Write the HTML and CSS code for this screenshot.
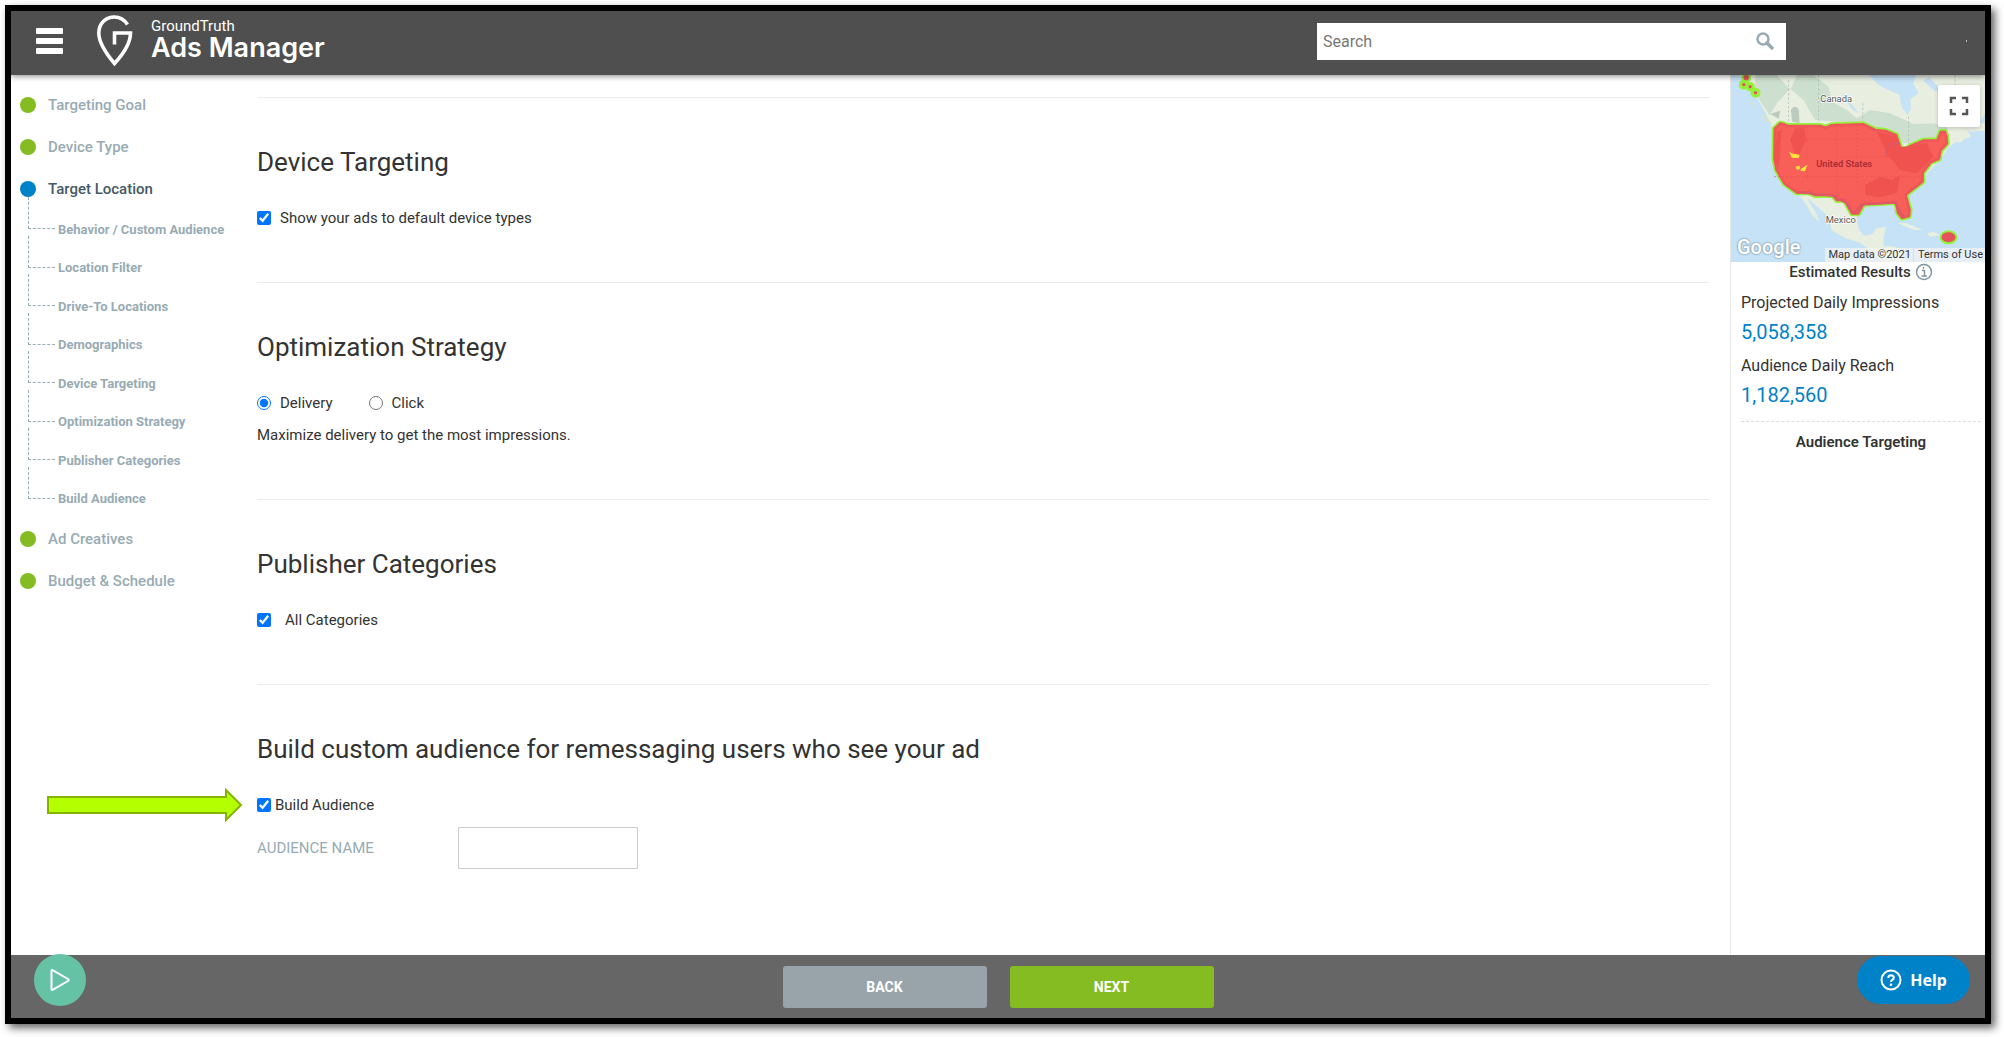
FILE: index.html
```html
<!DOCTYPE html>
<html lang="en">
<head>
    <meta charset="UTF-8">
    <meta name="viewport" content="width=device-width, initial-scale=1.0">
    <title>GroundTruth Ads Manager</title>
    <link rel="stylesheet" href="styles.css">
</head>
<body>
    <div class="frame">
        <header class="topbar">
            <button class="menu-btn" type="button" aria-label="Menu">
                <span></span><span></span><span></span>
            </button>
            <a class="brand" href="#">
                <svg class="brand-logo" viewBox="0 0 36 52" aria-hidden="true">
                    <path d="M30.500 9.500C27.500 5 22.800 2 17.500 2C8.500 2 1.800 8.500 1.800 18C1.800 29 12 42 17.500 48.500C23.500 42 33.500 29.500 33.500 18H17.500V29.500" fill="none" stroke="#fff" stroke-width="3.600"/>
                </svg>
                <span class="brand-text">
                    <span class="brand-small">GroundTruth</span>
                    <span class="brand-big">Ads Manager</span>
                </span>
            </a>
            <form class="search">
                <input type="search" placeholder="Search" aria-label="Search">
                <button type="button" aria-label="Submit search">
                    <svg viewBox="0 0 18 18" width="18" height="18">
                        <circle cx="7" cy="7" r="5.500" fill="none" stroke="#98abb3" stroke-width="2.500"/>
                        <path d="M11 11L16 16" stroke="#98abb3" stroke-width="3.500" stroke-linecap="round"/>
                    </svg>
                </button>
            </form>
            <span class="user-dot"></span>
        </header>

        <div class="content">
            <nav class="steps">
                <ul>
                    <li><a href="#">Targeting Goal</a></li>
                    <li><a href="#">Device Type</a></li>
                    <li class="current"><a href="#">Target Location</a>
                        <ul class="substeps">
                            <li><a href="#">Behavior / Custom Audience</a></li>
                            <li><a href="#">Location Filter</a></li>
                            <li><a href="#">Drive-To Locations</a></li>
                            <li><a href="#">Demographics</a></li>
                            <li><a href="#">Device Targeting</a></li>
                            <li><a href="#">Optimization Strategy</a></li>
                            <li><a href="#">Publisher Categories</a></li>
                            <li><a href="#">Build Audience</a></li>
                        </ul>
                    </li>
                    <li><a href="#">Ad Creatives</a></li>
                    <li><a href="#">Budget &amp; Schedule</a></li>
                </ul>
            </nav>

            <main class="settings">
                <section>
                    <h2>Device Targeting</h2>
                    <div class="row">
                        <label><input type="checkbox" checked> Show your ads to default device types</label>
                    </div>
                </section>
                <section>
                    <h2>Optimization Strategy</h2>
                    <div class="row">
                        <label><input type="radio" name="strategy" checked> Delivery</label>
                        <label><input type="radio" name="strategy"> Click</label>
                    </div>
                    <p class="row">Maximize delivery to get the most impressions.</p>
                </section>
                <section>
                    <h2>Publisher Categories</h2>
                    <div class="row">
                        <label class="wide"><input type="checkbox" checked> All Categories</label>
                    </div>
                </section>
                <section>
                    <h2>Build custom audience for remessaging users who see your ad</h2>
                    <div class="row">
                        <svg class="arrow" viewBox="0 0 196 34" aria-hidden="true">
                            <path d="M1 9H179V2L194 17L179 32V25H1Z" fill="#b4ff00" stroke="#86b300" stroke-width="2"/>
                        </svg>
                        <label class="tight"><input type="checkbox" checked> Build Audience</label>
                    </div>
                    <div class="field">
                        <label for="audience-name">AUDIENCE NAME</label>
                        <input type="text" id="audience-name">
                    </div>
                </section>
            </main>

            <aside class="results">
                <div class="map">
                    <svg viewBox="92 45 763 561" preserveAspectRatio="xMidYMid slice" role="img" aria-label="Map of targeted area">
                        <rect x="92" y="45" width="763" height="561" fill="#c6e2f6"/>
                        <!-- land -->
                        <path d="M115 45H508Q530 75 560 88L598 104L604 140L622 165L632 148L630 118L655 100L640 72L648 45H855V160L838 188L855 190V214L800 205L812 230L770 245L745 262L720 300L680 340L672 372L625 405L634 460L610 480L585 430L530 434L485 440L470 470Q468 505 490 525Q515 532 528 505L558 500L550 535L552 560Q575 556 600 566L618 606H545L520 580L480 548L440 536L395 512L385 470L340 430L312 406L290 404L240 360L218 300L216 200L196 160L168 108L130 60Z" fill="#e8eee0"/>
                        <path d="M165 45H230L262 80L310 120L345 180L460 190L560 210L610 250L720 240L745 205L700 190L640 192L570 160L510 150L470 175L440 150L395 125L385 80L340 45H290L275 80L230 130L208 165L165 100Z" fill="#cddfce"/>
                        <path d="M272 150Q285 130 296 150L298 190L276 185ZM210 162L240 152L236 176Z" fill="#bccbbf"/>
                        <path d="M505 45H620Q588 60 602 84L596 98Q565 75 540 78ZM428 100L452 130L475 160L458 150L436 120ZM670 62L685 50L730 96L702 92Z" fill="#c6e2f6"/>
                        <path d="M150 125L162 128L168 148ZM180 160L200 170L216 192L200 186Z" fill="#d5e4cf"/>
                        <path d="M298 405L318 435L340 470L357 486L350 462L330 432L318 408Z" fill="#e8eee0"/>
                        <path d="M590 488L620 490L668 510L640 510ZM680 520L700 516L722 526L690 530ZM800 208L842 196L855 210L812 216ZM765 246L798 230L785 246Z" fill="#e8eee0"/>
                        <path d="M355 45V190M265 60V185M488 130V185M625 170V255M765 45V75" stroke="#adb7b4" stroke-width="2" stroke-dasharray="7 6" fill="none"/>
                        <!-- covered area -->
                        <defs>
                            <path id="usa" d="M224 206L240 191Q250 191 262 198L360 198L376 203L395 196L490 193L525 210L556 213L588 226L600 262L614 273L630 259L670 242L712 241L722 216L734 216L738 228L740 250L720 272L716 296L692 306L667 338L667 364L616 404L628 450L626 468L606 473L594 458L588 426L540 429L490 431L474 460L456 460L434 420L410 420L398 405L345 405L325 397L290 397L253 370L229 328L223 296Z"/>
                        </defs>
                        <use href="#usa" class="halo"/>
                        <g class="halo">
                            <circle cx="138" cy="53" r="6"/><circle cx="131" cy="74" r="6"/><circle cx="150" cy="80" r="5"/><circle cx="166" cy="98" r="6"/>
                            <ellipse cx="745" cy="532" rx="18" ry="12"/>
                        </g>
                        <use href="#usa" class="covered"/>
                        <path d="M285 205L312 200L318 240L290 300L270 240ZM495 375L540 350L575 360L600 345L590 400L540 412L495 405ZM230 215L245 210L236 330L222 300ZM530 215L590 230L600 262L680 250L700 290L650 340L600 330L560 280Z" fill="#f0534f"/>
                        <path d="M560 290Q552 248 598 250M290 398L325 400L400 408L440 430L460 460L482 434L584 428L612 472" fill="none" stroke="#de5868" stroke-width="6"/>
                        <path d="M320 200V360M410 190V400M470 195V380M222 350H660M320 238H520M420 290H600" stroke="#e65552" stroke-width="2" stroke-dasharray="6 6" fill="none"/>
                        <path d="M267 276L278 281L298 284L296 294L275 293ZM286 320L298 317L300 327L290 329ZM303 326L322 314L314 334L300 333Z" fill="#ffe53b"/>
                        <g fill="#e4525c">
                            <circle cx="138" cy="53" r="8"/><circle cx="131" cy="74" r="5"/><circle cx="150" cy="80" r="5"/><circle cx="166" cy="98" r="5"/>
                            <ellipse cx="745" cy="532" rx="21" ry="15"/>
                        </g>
                        <g class="map-names">
                            <text x="408" y="126">Canada</text>
                            <text x="432" y="322" class="country">United States</text>
                            <text x="422" y="488">Mexico</text>
                        </g>
                    </svg>
                    <button class="fullscreen" type="button" aria-label="Toggle fullscreen view">
                        <svg viewBox="0 0 20 20" width="20" height="20">
                            <path d="M2 7V2H7M13 2H18V7M18 13V18H13M7 18H2V13" fill="none" stroke="#555" stroke-width="2.500"/>
                        </svg>
                    </button>
                    <span class="google">Google</span>
                    <div class="map-credit"><span>Map data ©2021</span><a href="#">Terms of Use</a></div>
                </div>
                <div class="estimates">
                    <h3>Estimated Results
                        <svg viewBox="0 0 18 18" width="18" height="18" aria-hidden="true">
                            <circle cx="9" cy="9" r="7.500" fill="none" stroke="#8196a0" stroke-width="1.500"/>
                            <path d="M7 7.500H9.500V13M6.500 13H12M8.500 4V5.800" fill="none" stroke="#8196a0" stroke-width="1.500"/>
                        </svg>
                    </h3>
                    <dl>
                        <dt>Projected Daily Impressions</dt>
                        <dd>5,058,358</dd>
                        <dt>Audience Daily Reach</dt>
                        <dd>1,182,560</dd>
                    </dl>
                    <h4>Audience Targeting</h4>
                </div>
            </aside>
        </div>

        <footer class="actions">
            <button class="play" type="button" aria-label="Play guide">
                <svg viewBox="0 0 22 24" width="22" height="24">
                    <path d="M2.500 3.200V20.800Q2.500 22.500 4 21.600L19 13Q20.500 12 19 11L4 2.400Q2.500 1.500 2.500 3.200Z" fill="none" stroke="#fff" stroke-width="2"/>
                </svg>
            </button>
            <button class="btn back" type="button">BACK</button>
            <button class="btn next" type="button">NEXT</button>
            <button class="help" type="button">
                <svg viewBox="0 0 22 22" width="22" height="22" aria-hidden="true">
                    <circle cx="11" cy="11" r="9.500" fill="none" stroke="#fff" stroke-width="2"/>
                    <path d="M8.200 8.800Q8.400 6.200 11 6.200Q13.800 6.300 13.800 8.700Q13.700 10 12.300 10.900Q11 11.700 11 13" fill="none" stroke="#fff" stroke-width="2"/>
                    <circle cx="11" cy="15.800" r="1.300" fill="#fff"/>
                </svg>
                Help
            </button>
        </footer>
    </div>
</body>
</html>
```
FILE: styles.css
```css
* {
    box-sizing: border-box;
}

body {
    margin: 0;
    padding: 5px 13px 13px 5px;
    min-height: 100vh;
    display: flex;
    background-color: #fff;
    font-family: Roboto, "Liberation Sans", sans-serif;
    font-size: 15px;
    color: #333;
}

a {
    color: inherit;
    text-decoration: none;
}

button {
    padding: 0;
    border: none;
    background: none;
    font-family: inherit;
    cursor: pointer;
}

ul {
    margin: 0;
    padding: 0;
    list-style: none;
}

.frame {
    flex: 1;
    display: flex;
    flex-direction: column;
    border: 6px solid #000;
    box-shadow: 4px 4px 8px rgba(0, 0, 0, 0.6);
}

/* Header */
.topbar {
    display: flex;
    align-items: center;
    height: 64px;
    padding: 0 18px 4px 25px;
    background-color: #4f4f4f;
    box-shadow: 0 1px 6px rgba(0, 0, 0, 0.5);
    position: relative;
    z-index: 1;
}

.menu-btn {
    display: flex;
    flex-direction: column;
    gap: 4px;
    width: 27px;
}

.menu-btn span {
    height: 6px;
    border-radius: 1px;
    background-color: #fff;
}

.brand {
    display: flex;
    align-items: center;
    gap: 18px;
    margin-left: 34px;
    color: #fff;
}

.brand-logo {
    width: 36px;
    height: 52px;
}

.brand-text {
    display: flex;
    flex-direction: column;
    padding-bottom: 2px;
}

.brand-small {
    font-size: 15px;
    line-height: 16px;
}

.brand-big {
    font-family: Inter, sans-serif;
    font-size: 27px;
    font-weight: 600;
    line-height: 28px;
}

.search {
    display: flex;
    align-items: center;
    flex: 0 1 469px;
    height: 37px;
    margin-left: auto;
    margin-right: 180px;
    padding: 0 12px 0 6px;
    background-color: #fff;
}

.search input {
    flex: 1;
    min-width: 0;
    padding: 0;
    border: none;
    outline: none;
    font-family: inherit;
    font-size: 16px;
}

.search input::placeholder {
    color: #777;
}

.search button {
    display: flex;
}

.user-dot {
    width: 1px;
    height: 2px;
    background-color: #bbb;
}

/* Left steps */
.content {
    flex: 1;
    display: flex;
}

.steps {
    flex: 0 0 246px;
    padding: 9px 0 0 9px;
    color: #98abb3;
}

.steps > ul > li > a {
    display: flex;
    align-items: center;
    gap: 12px;
    height: 42px;
    font-weight: 500;
}

.steps > ul > li > a::before {
    content: "";
    width: 16px;
    height: 16px;
    border-radius: 50%;
    background-color: #84bc22;
}

.steps .current > a {
    color: #455a64;
}

.steps .current > a::before {
    background-color: #0082c8;
}

.substeps {
    display: grid;
    grid-auto-rows: 1fr;
    height: 308px;
}

.substeps li {
    display: flex;
    align-items: center;
    padding-left: 38px;
    position: relative;
    font-size: 13px;
    font-weight: 700;
}

/* dashed connector to the previous step */
.substeps li::before {
    content: "";
    position: absolute;
    left: 8px;
    bottom: 50%;
    width: 26px;
    height: 31px;
    border-left: 1px dashed #98abb3;
    border-bottom: 1px dashed #98abb3;
}

/* Settings */
.settings {
    flex: 1;
    padding: 22px 21px 0 0;
}

.settings section {
    padding: 48px 0;
    border-top: 1px solid #ebebeb;
}

.settings h2 {
    margin: 0 0 24px;
    font-size: 26px;
    font-weight: 400;
    line-height: 32px;
}

.row {
    display: flex;
    align-items: center;
    gap: 36px;
    height: 32px;
    margin: 0;
    position: relative;
}

.row label {
    display: flex;
    align-items: center;
    gap: 9px;
}

.row .wide {
    gap: 14px;
}

.row .tight {
    gap: 4px;
}

.row input {
    width: 14px;
    height: 14px;
    margin: 0;
}

.arrow {
    position: absolute;
    right: 100%;
    width: 196px;
    height: 34px;
    margin-right: 14px;
}

.field {
    display: flex;
    align-items: center;
    padding-top: 6px;
}

.field label {
    width: 201px;
    color: #98abb3;
}

.field input {
    width: 180px;
    height: 42px;
    padding: 0 10px;
    border: 1px solid #ccc;
    font: inherit;
}

/* Right results */
.results {
    flex: 0 0 255px;
    border-left: 1px solid #e6e6e6;
}

.map {
    height: 187px;
    position: relative;
    overflow: hidden;
}

.map > svg {
    display: block;
    width: 100%;
    height: 100%;
}

.halo {
    fill: #93f23a;
    stroke: #93f23a;
    stroke-width: 18px;
    stroke-linejoin: round;
}

.covered {
    fill: #f95f59;
    stroke: #f0555a;
    stroke-width: 8px;
    stroke-linejoin: round;
}

.map-names text {
    font-size: 28px;
    text-anchor: middle;
    fill: #555;
    stroke: #fff;
    stroke-width: 4px;
    paint-order: stroke;
}

.map-names .country {
    fill: #a52a30;
    stroke: none;
    font-weight: 500;
}

.fullscreen {
    position: absolute;
    top: 10px;
    right: 5px;
    display: grid;
    place-items: center;
    width: 42px;
    height: 42px;
    border-radius: 2px;
    background-color: #fff;
    box-shadow: 0 1px 4px rgba(0, 0, 0, 0.2);
}

.google {
    position: absolute;
    left: 6px;
    bottom: 3px;
    color: #fff;
    font-size: 20px;
    font-weight: 500;
    line-height: 24px;
    text-shadow: 0 0 2px #8496a3, 0 0 2px #8496a3;
}

.map-credit {
    position: absolute;
    right: 0;
    bottom: 0;
    display: flex;
    gap: 1px;
    font-size: 11px;
    line-height: 14px;
    color: #333;
}

.map-credit span,
.map-credit a {
    padding: 0 2px 0 4px;
    background-color: rgba(245, 245, 245, 0.7);
}

.estimates {
    padding: 0 4px 0 10px;
    text-align: center;
}

.estimates h3 {
    display: flex;
    align-items: center;
    justify-content: center;
    gap: 4px;
    margin: 0;
    font-size: 15px;
    font-weight: 500;
    line-height: 20px;
}

.estimates dl {
    margin: 0 0 9px;
    padding: 5px 0 8px;
    border-bottom: 1px dashed #ddd;
    text-align: left;
}

.estimates dt {
    font-size: 16px;
    line-height: 32px;
}

.estimates dd {
    margin: 0;
    padding-bottom: 5px;
    color: #0082c8;
    font-size: 20px;
    line-height: 26px;
}

.estimates h4 {
    margin: 0;
    font-size: 15px;
    font-weight: 600;
    line-height: 22px;
}

/* Footer */
.actions {
    display: flex;
    align-items: center;
    justify-content: center;
    gap: 23px;
    height: 63px;
    background-color: #666;
    position: relative;
}

.btn {
    width: 204px;
    height: 42px;
    border-radius: 3px;
    color: #fff;
    font-size: 14px;
    font-weight: 700;
}

.back {
    background-color: #98a4aa;
}

.next {
    background-color: #84bc22;
}

.play {
    position: absolute;
    left: 23px;
    top: -1px;
    display: grid;
    place-items: center;
    width: 52px;
    height: 52px;
    border-radius: 50%;
    background-color: #66c2a5;
}

.help {
    position: absolute;
    right: 15px;
    top: 1px;
    display: flex;
    align-items: center;
    justify-content: center;
    gap: 8px;
    width: 113px;
    height: 48px;
    border-radius: 24px;
    background-color: #0082c8;
    color: #fff;
    font-family: "Noto Sans", sans-serif;
    font-size: 16px;
    font-weight: 700;
}
```
